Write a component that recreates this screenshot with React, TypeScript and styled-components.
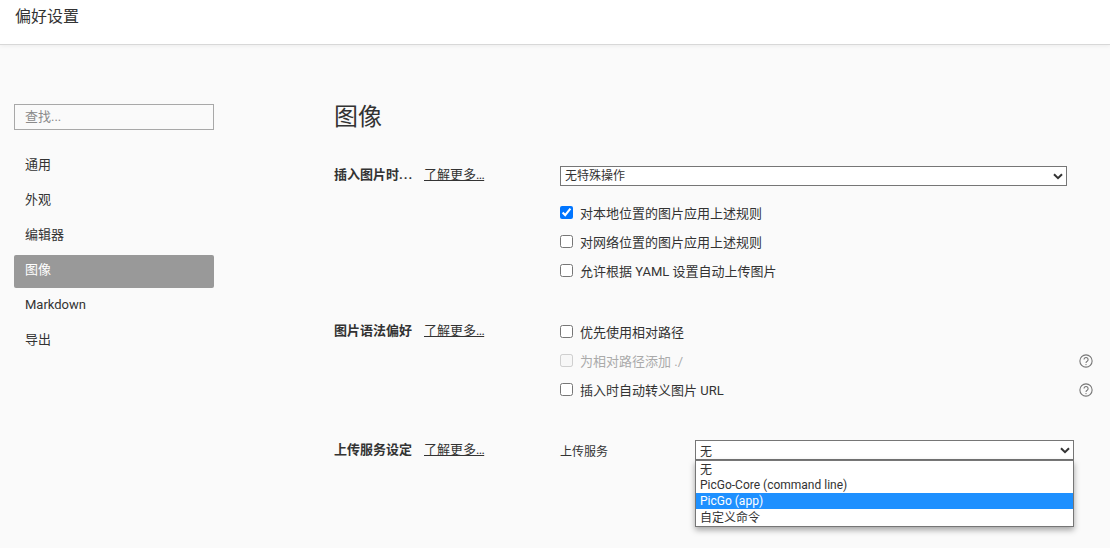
import styled, { createGlobalStyle } from "styled-components";

const GlobalStyle = createGlobalStyle`
  html, body {
    margin: 0;
    padding: 0;
    height: 100%;
    overflow: hidden;
    background: #fafafa;
    font-family: Roboto, "Noto Sans CJK SC", sans-serif;
    font-size: 13px;
    color: #333;
  }
`;

const Page = styled.div`
  width: 1110px;
  height: 548px;
  overflow: hidden;
`;

const Header = styled.header`
  height: 44px;
  box-sizing: content-box;
  background: #fff;
  border-bottom: 1px solid #d8d8d8;
  box-shadow: 0 1px 4px rgba(0, 0, 0, 0.06);
  padding-left: 15px;
  font-size: 16px;
  line-height: 34px;
  color: #333;
`;

const Body = styled.div`
  display: flex;
  padding: 59px 17px 0 14px;
`;

const Sidebar = styled.nav`
  width: 200px;
  flex: none;
  margin-right: 120px;
`;

const Search = styled.input`
  display: block;
  box-sizing: border-box;
  width: 200px;
  height: 26px;
  padding: 0 10px 1px;
  margin-bottom: 20px;
  border: 1px solid #a8a8a8;
  background: #fafafa;
  font: inherit;
  font-size: 13px;
  outline: none;
  &::placeholder {
    color: #8a8a8a;
  }
`;

const NavItem = styled.div<{ $active?: boolean }>`
  height: 33px;
  margin-bottom: 2px;
  padding-left: 11px;
  line-height: 30px;
  border-radius: 2px;
  background: ${(p) => (p.$active ? "#999" : "transparent")};
  color: ${(p) => (p.$active ? "#fff" : "#333")};
`;

const Main = styled.main`
  flex: 1;
  min-width: 0;
`;

const Title = styled.h1`
  margin: 0 0 36px;
  font-size: 24px;
  font-weight: 400;
  line-height: 26px;
  color: #333;
`;

const Section = styled.section<{ $gap: number }>`
  display: flex;
  margin-bottom: ${(p) => p.$gap}px;
`;

const SectionHead = styled.div<{ $offset?: number }>`
  display: flex;
  width: 226px;
  flex: none;
  align-self: flex-start;
  margin-top: ${(p) => p.$offset ?? 0}px;
  line-height: 18px;
`;

const SectionName = styled.span`
  width: 90px;
  flex: none;
  font-weight: 700;
  white-space: nowrap;
`;

const BoldDots = styled.span`
  letter-spacing: 1px;
`;

const LearnMore = styled.a`
  color: #333;
  text-decoration: underline;
  font-size: 13px;
`;

const ThinDots = styled.span`
  letter-spacing: -0.7px;
`;

const Options = styled.div`
  flex: 1;
  min-width: 0;
`;

const SelectWrap = styled.div<{ $width: number; $gap: number; $top?: number }>`
  position: relative;
  width: ${(p) => p.$width}px;
  flex: none;
  margin-top: ${(p) => p.$top ?? 0}px;
  margin-bottom: ${(p) => p.$gap}px;
`;

const SelectBox = styled.select`
  display: block;
  box-sizing: border-box;
  width: 100%;
  height: 20px;
  padding: 0 0 0 4px;
  border: 1px solid #767676;
  border-radius: 0;
  background: #fff;
  appearance: none;
  font: inherit;
  font-size: 12px;
  color: #333;
`;

const Chevron = styled.svg`
  position: absolute;
  top: 7px;
  right: 4px;
  width: 10px;
  height: 7px;
  pointer-events: none;
  color: #333;
`;

const CheckRow = styled.label<{ $disabled?: boolean }>`
  display: flex;
  align-items: center;
  height: 29px;
  color: ${(p) => (p.$disabled ? "#aaa" : "#333")};
`;

const Check = styled.input`
  width: 13px;
  height: 13px;
  margin: 0 7px 0 0;
  accent-color: #0075ff;
`;

const Help = styled.svg`
  width: 14px;
  height: 14px;
  margin-left: auto;
  flex: none;
  color: #777;
`;

const ServiceRow = styled.div`
  display: flex;
  align-items: flex-start;
  line-height: 22px;
`;

const ServiceLabel = styled.span`
  width: 135px;
  flex: none;
  font-size: 12px;
`;

const OpenList = styled.ul`
  position: absolute;
  z-index: 2;
  top: 20px;
  left: 0;
  right: 0;
  margin: 0;
  padding: 0;
  list-style: none;
  background: #fff;
  border: 1px solid #767676;
  box-shadow: 0 3px 6px rgba(0, 0, 0, 0.35);
  font-size: 12px;
  line-height: 16px;
`;

const OpenOption = styled.li<{ $selected?: boolean }>`
  padding-left: 4px;
  height: 16px;
  background: ${(p) => (p.$selected ? "#1e90ff" : "transparent")};
  color: ${(p) => (p.$selected ? "#fff" : "#333")};
  &:first-child {
    line-height: 18px;
  }
  &:last-child {
    height: 17px;
    line-height: 18px;
  }
`;

function HelpIcon() {
  return (
    <Help viewBox="0 0 24 24" fill="none" stroke="currentColor" strokeWidth="1.9">
      <circle cx="12" cy="12" r="10.5" />
      <path d="M8.6 9.4a3.5 3.5 0 1 1 5.4 3c-1.3.8-2 1.5-2 3" />
      <circle cx="12" cy="18.2" r="1.1" fill="currentColor" stroke="none" />
    </Help>
  );
}

function SelectArrow() {
  return (
    <Chevron viewBox="0 0 10 7" fill="none" stroke="currentColor" strokeWidth="2">
      <path d="M1 1.2l4 4 4-4" />
    </Chevron>
  );
}

const navItems = ["通用", "外观", "编辑器", "图像", "Markdown", "导出"];
const services = ["无", "PicGo-Core (command line)", "PicGo (app)", "自定义命令"];

export default function App() {
  return (
    <Page>
      <GlobalStyle />
      <Header>偏好设置</Header>
      <Body>
        <Sidebar>
          <Search placeholder="查找..." readOnly />
          {navItems.map((item) => (
            <NavItem key={item} $active={item === "图像"}>
              {item}
            </NavItem>
          ))}
        </Sidebar>
        <Main>
          <Title>图像</Title>
          <Section $gap={32}>
            <SectionHead>
              <SectionName>
                插入图片时<BoldDots>...</BoldDots>
              </SectionName>
              <LearnMore>
                了解更多<ThinDots>...</ThinDots>
              </LearnMore>
            </SectionHead>
            <Options>
              <SelectWrap $width={507} $gap={12}>
                <SelectBox defaultValue="none">
                  <option value="none">无特殊操作</option>
                </SelectBox>
                <SelectArrow />
              </SelectWrap>
              <CheckRow>
                <Check type="checkbox" defaultChecked />
                对本地位置的图片应用上述规则
              </CheckRow>
              <CheckRow>
                <Check type="checkbox" />
                对网络位置的图片应用上述规则
              </CheckRow>
              <CheckRow>
                <Check type="checkbox" />
                允许根据 YAML 设置自动上传图片
              </CheckRow>
            </Options>
          </Section>
          <Section $gap={37}>
            <SectionHead $offset={5}>
              <SectionName>图片语法偏好</SectionName>
              <LearnMore>
                了解更多<ThinDots>...</ThinDots>
              </LearnMore>
            </SectionHead>
            <Options>
              <CheckRow>
                <Check type="checkbox" />
                优先使用相对路径
              </CheckRow>
              <CheckRow $disabled>
                <Check type="checkbox" disabled />
                为相对路径添加 ./
                <HelpIcon />
              </CheckRow>
              <CheckRow>
                <Check type="checkbox" />
                插入时自动转义图片 URL
                <HelpIcon />
              </CheckRow>
            </Options>
          </Section>
          <Section $gap={0}>
            <SectionHead>
              <SectionName>上传服务设定</SectionName>
              <LearnMore>
                了解更多<ThinDots>...</ThinDots>
              </LearnMore>
            </SectionHead>
            <Options>
              <ServiceRow>
                <ServiceLabel>上传服务</ServiceLabel>
                <SelectWrap $width={379} $gap={0} $top={-1}>
                  <SelectBox defaultValue="无">
                    <option>无</option>
                  </SelectBox>
                  <SelectArrow />
                  <OpenList>
                    {services.map((s) => (
                      <OpenOption key={s} $selected={s === "PicGo (app)"}>
                        {s}
                      </OpenOption>
                    ))}
                  </OpenList>
                </SelectWrap>
              </ServiceRow>
            </Options>
          </Section>
        </Main>
      </Body>
    </Page>
  );
}
